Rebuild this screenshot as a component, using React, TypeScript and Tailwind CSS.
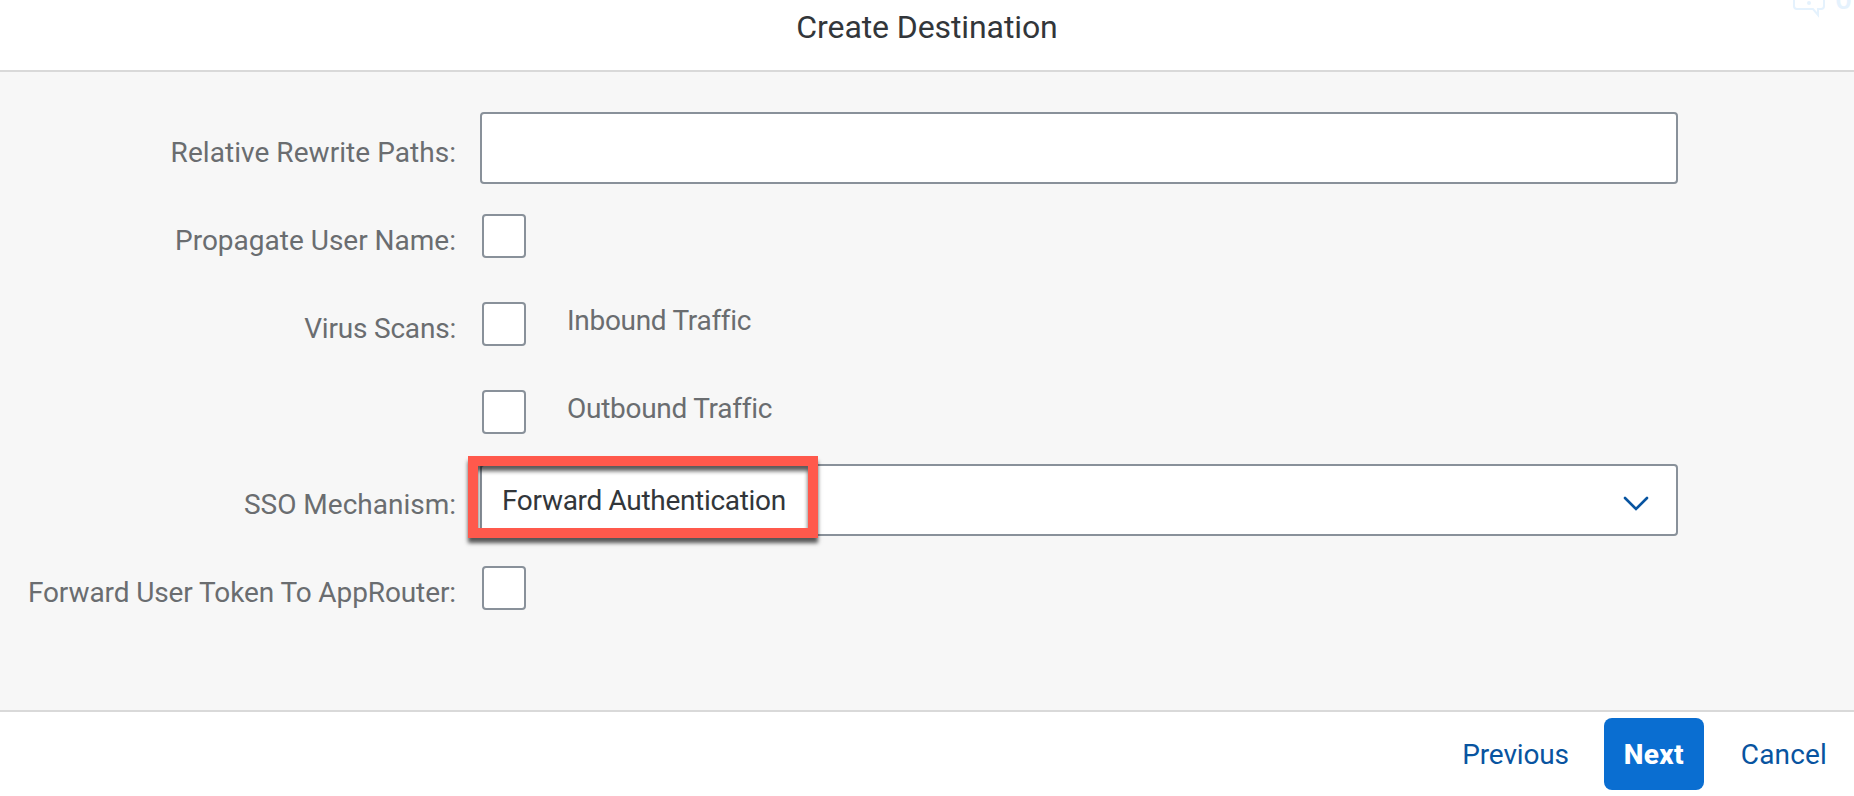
import React from "react";

function Checkbox() {
  return <div className="ml-0.5 size-11 shrink-0 rounded-[4px] border-2 border-[#89919a] bg-white" />;
}

interface RowProps {
  label?: string;
  tracking?: string;
  children: React.ReactNode;
}

function FormRow({ label, tracking = "", children }: RowProps) {
  return (
    <div className="flex h-[88px] items-center">
      <div className="flex w-[480px] shrink-0 justify-end pt-[9px] pr-6">
        <span className={`whitespace-nowrap text-[#6a6d70] ${tracking}`}>{label}</span>
      </div>
      {children}
    </div>
  );
}

export default function App() {
  return (
    <div className="flex h-[796px] w-[1854px] flex-col overflow-hidden bg-white font-['Roboto','Liberation_Sans',sans-serif] text-[28px] leading-[36px]">
      <header className="relative flex h-[72px] shrink-0 justify-center border-b-2 border-[#d9d9d9]">
        <h1 className="mt-[7px] text-[32px] leading-10 tracking-[-0.1px] whitespace-nowrap text-[#32363a]">Create Destination</h1>
        <div className="absolute top-0 right-0 flex h-5 w-[62px] overflow-hidden text-[#e5f2fd]">
          <svg width="62" height="20" viewBox="0 0 62 20" fill="none" stroke="currentColor" strokeWidth="2">
            <path d="M2 0V6Q2 9 5 9H21L26 15V9H29Q32 9 32 6V0" />
            <circle cx="17" cy="3" r="2" fill="currentColor" stroke="none" />
          </svg>
          <span className="absolute -top-[26px] left-[43px] text-[30px] leading-[50px] font-medium">0</span>
        </div>
      </header>

      <main className="h-[638px] shrink-0 bg-[#f7f7f7] pt-8">
        <FormRow label="Relative Rewrite Paths:" tracking="tracking-[0.05px]">
          <div className="h-[72px] w-[1198px] rounded-[4px] border-2 border-[#89919a] bg-white" />
        </FormRow>
        <FormRow label="Propagate User Name:">
          <Checkbox />
        </FormRow>
        <FormRow label="Virus Scans:" tracking="tracking-[-0.2px]">
          <Checkbox />
          <span className="pb-[7px] pl-[41px] tracking-[-0.3px] text-[#6a6d70]">Inbound Traffic</span>
        </FormRow>
        <FormRow>
          <Checkbox />
          <span className="pb-[7px] pl-[41px] tracking-[-0.27px] text-[#6a6d70]">Outbound Traffic</span>
        </FormRow>
        <FormRow label="SSO Mechanism:">
          <div className="relative flex h-[72px] w-[1198px] items-center justify-between rounded-[4px] border-2 border-[#89919a] bg-white pr-[26px] pl-5">
            <span className="pt-0.5 tracking-[-0.32px] text-[#32363a]">Forward Authentication</span>
            <svg className="mt-[7px]" width="28" height="18" viewBox="0 0 28 18" fill="none" stroke="#0854a0" strokeWidth="2.6" strokeLinecap="round">
              <path d="M3 3L14 14L25 3" />
            </svg>
            <div className="absolute -top-[10px] -left-[14px] h-[82px] w-[350px] border-[10px] border-[#ff594c] shadow-[0_5px_4px_rgba(0,0,0,0.65),inset_0_5px_4px_rgba(0,0,0,0.65)]" />
          </div>
        </FormRow>
        <FormRow label="Forward User Token To AppRouter:" tracking="tracking-[-0.1px]">
          <Checkbox />
        </FormRow>
      </main>

      <footer className="flex flex-1 items-start justify-end border-t-2 border-[#d9d9d9] pt-1.5 pr-[27px] text-[#0854a0]">
        <button className="h-[72px] pt-0.5 tracking-[-0.15px]">Previous</button>
        <button className="mr-[37px] ml-[35px] h-[72px] w-[100px] rounded-lg bg-[#0a6ed1] pt-0.5 font-extrabold tracking-[0.4px] text-white">Next</button>
        <button className="h-[72px] pt-0.5 tracking-[0.15px]">Cancel</button>
      </footer>
    </div>
  );
}
